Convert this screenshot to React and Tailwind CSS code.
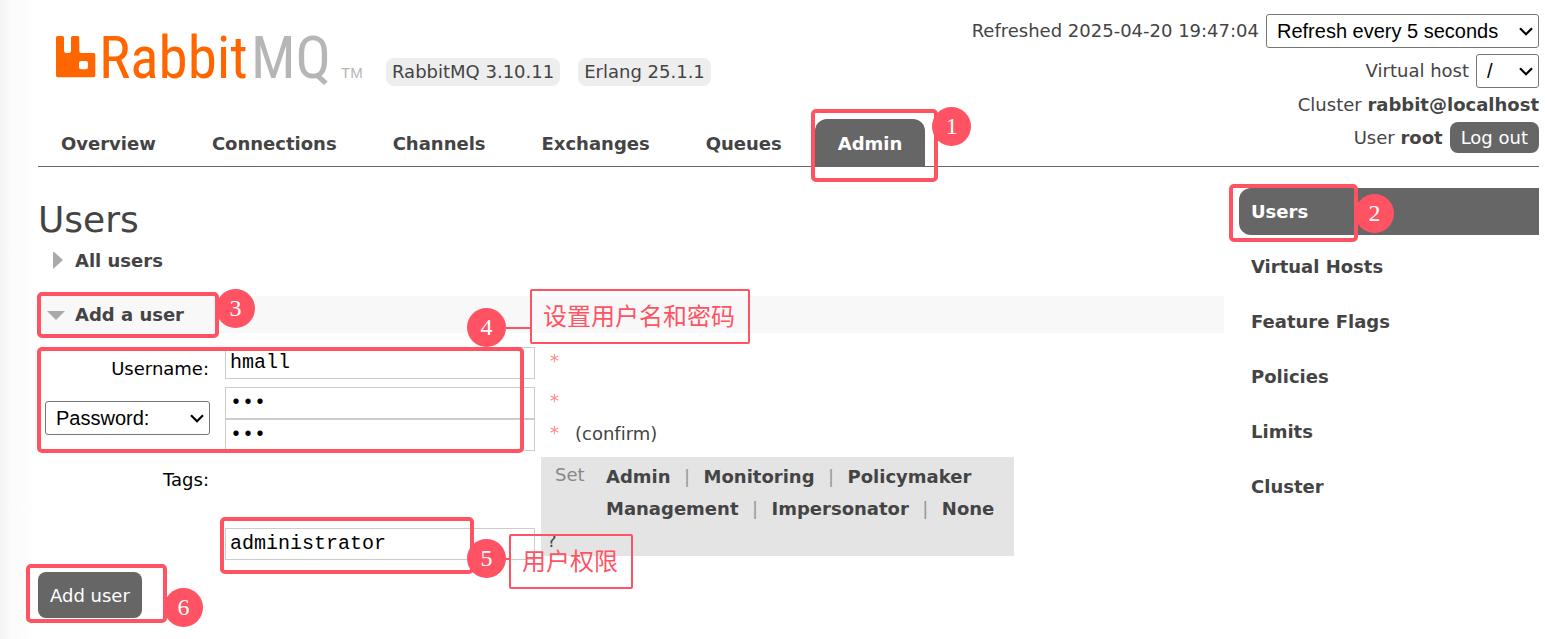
import React from "react";

const tabs = ["Overview", "Connections", "Channels", "Exchanges", "Queues", "Admin"];
const sections = ["Users", "Virtual Hosts", "Feature Flags", "Policies", "Limits", "Cluster"];
const tagRows = [
  ["Admin", "Monitoring", "Policymaker"],
  ["Management", "Impersonator", "None"],
];

function Frame({ className }) {
  return (
    <span
      aria-hidden="true"
      className={`pointer-events-none absolute z-10 rounded-[5px] border-4 border-[#ff5364] ${className}`}
    />
  );
}

function Badge({ n, className }) {
  return (
    <span
      className={`pointer-events-none absolute z-20 flex size-[39px] items-center justify-center rounded-full bg-[#ff5364] pb-[2px] font-['Liberation_Serif',serif] text-2xl font-normal text-white ${className}`}
    >
      {n}
    </span>
  );
}

function Callout({ children, className }) {
  return (
    <span
      className={`pointer-events-none absolute z-10 rounded-[2px] border-2 border-[#ff5364] pr-[13px] pb-1 pl-[11px] text-center font-['Noto_Sans_CJK_SC',sans-serif] text-2xl leading-[47px] font-normal whitespace-nowrap text-[#ff5364] ${className}`}
    >
      {children}
    </span>
  );
}

function Select({ id, label, options, className }) {
  return (
    <span className={`relative inline-block ${className}`}>
      <select
        id={id}
        aria-label={label}
        className="h-[34px] w-full appearance-none rounded-[3px] border border-[#767676] bg-white pr-8 pl-[10px] font-['Liberation_Sans',sans-serif] text-xl leading-8 text-black"
      >
        {options.map((o) => (
          <option key={o}>{o}</option>
        ))}
      </select>
      <svg
        viewBox="0 0 14 9"
        className="pointer-events-none absolute top-[13px] right-[6px] h-[9px] w-[14px]"
        fill="none"
        stroke="#000"
        strokeWidth="2.2"
      >
        <path d="M1 1.2 7 7.2 13 1.2" />
      </svg>
    </span>
  );
}

function Logo() {
  return (
    <svg viewBox="0 0 308 51" className="h-[51px] w-[308px] shrink-0 overflow-visible" role="img" aria-label="RabbitMQ">
      <path
        fill="#f60"
        fillRule="evenodd"
        d="M1.6 1H6.4Q8 1 8 2.6V15.8Q8 18 10.2 18H12.8Q15 18 15 15.8V2.6Q15 1 16.6 1H21.7Q23.3 1 23.3 2.6V15.8Q23.3 18 25.5 18H37.6Q39.3 18 39.3 19.7V40.6Q39.3 42.3 37.6 42.3H1.7Q0 42.3 0 40.6V2.6Q0 1 1.6 1ZM25 26Q23 26 23 28V32.300Q23 34.300 25 34.300H30Q32 34.300 32 32.300V28Q32 26 30 26Z"
      />
      <g fontFamily="'Roboto Condensed', 'Liberation Sans', sans-serif" fontSize="59">
        <text x="43" y="43" fill="#f60">Rabbit</text>
        <text x="195" y="43" fill="#b6b6b6">MQ</text>
      </g>
      <text x="285" y="43" fill="#b6b6b6" fontFamily="'Liberation Sans', sans-serif" fontSize="15">TM</text>
    </svg>
  );
}

const inputClass =
  "block h-8 w-full rounded-none border border-[#ccc] bg-white px-1 pb-[2px] font-['Liberation_Mono',monospace] text-xl leading-7 text-black outline-none";

export default function App() {
  return (
    <div className="min-h-screen bg-linear-to-r from-[#f3f3f3] via-[#fbfbfb] via-[12px] to-white to-[38px] pr-[6px] pb-5 pl-[38px] font-['DejaVu_Sans',sans-serif] text-lg text-[#444] [font-variant-ligatures:none]">
      <header className="flex justify-between border-b border-[#666]">
        <div>
          <div className="flex items-end pt-[35px] pl-[18px]">
            <Logo />
            <div className="ml-[22px] flex gap-[18px] leading-7">
              <span className="rounded-lg bg-[#eee] px-[6px]">RabbitMQ 3.10.11</span>
              <span className="rounded-lg bg-[#eee] px-[6px]">Erlang 25.1.1</span>
            </div>
          </div>
          <nav className="mt-[33px] flex gap-[10px]">
            {tabs.map((t) => (
              <div key={t} className="relative">
                <a
                  href="#tab"
                  className={`block rounded-t-xl px-[23px] pt-[2px] leading-[45px] font-bold ${
                    t === "Admin" ? "bg-[#666] text-white" : ""
                  }`}
                >
                  {t}
                </a>
                {t === "Admin" && (
                  <>
                    <Frame className="-top-[10px] -right-[13px] -left-1 h-[73px]" />
                    <Badge n="1" className="-top-3 -right-[46px]" />
                  </>
                )}
              </div>
            ))}
          </nav>
        </div>
        <div className="flex flex-col items-end gap-[6px] pt-[14px]">
          <div className="flex items-center gap-[7px]">
            <span>Refreshed 2025-04-20 19:47:04</span>
            <Select
              id="refresh"
              label="Refresh interval"
              options={["Refresh every 5 seconds", "Refresh every 10 seconds", "Do not refresh"]}
              className="w-[273px]"
            />
          </div>
          <div className="flex items-center gap-[7px]">
            <label htmlFor="vhost">Virtual host</label>
            <Select id="vhost" options={["/", "All"]} className="w-[63px]" />
          </div>
          <div className="leading-[22px]">
            Cluster <b>rabbit@localhost</b>
          </div>
          <div className="flex items-center gap-[7px]">
            <span>
              User <b>root</b>
            </span>
            <button type="button" className="rounded-lg bg-[#666] px-[11px] leading-[31px] text-white">
              Log out
            </button>
          </div>
        </div>
      </header>

      <div className="mt-[21px] flex gap-[15px]">
        <main className="flex-1 pt-[9px]">
          <h1 className="text-4xl leading-[45px]">Users</h1>

          <h2 className="flex h-[37px] items-center font-bold">
            <svg viewBox="0 0 37 18" className="h-[18px] w-[37px]">
              <path d="M15 -1 25 8 15 17Z" fill="#aaa" />
            </svg>
            All users
          </h2>

          <h2 className="relative mt-[17px] flex h-[37px] items-center bg-[#f8f8f8] font-bold">
            <svg viewBox="0 0 37 18" className="h-[18px] w-[37px]">
              <path d="M9 5H27L18 14Z" fill="#aaa" />
            </svg>
            Add a user
            <Frame className="-top-1 -left-px h-[46px] w-[182px]" />
            <Badge n="3" className="-top-[7px] left-[178px]" />
          </h2>

          <form className="mt-[14px]" onSubmit={(e) => e.preventDefault()}>
            <div className="relative">
              <div className="flex">
                <label htmlFor="username" className="mt-3 w-[171px] text-right leading-5 text-black">
                  Username:
                </label>
                <div className="ml-4 w-[310px]">
                  <input id="username" type="text" defaultValue="hmall" className={inputClass} />
                </div>
                <span className="ml-[15px] leading-7 text-[#f88]">*</span>
              </div>
              <div className="mt-2 flex">
                <div className="mt-[14px] w-[172px] pl-[7px]">
                  <Select
                    id="password-kind"
                    label="Password type"
                    options={["Password:", "Hashed password:", "No password"]}
                    className="w-[165px]"
                  />
                </div>
                <div className="ml-[15px] w-[310px]">
                  <input type="password" aria-label="Password" defaultValue="123" className={inputClass} />
                  <input type="password" aria-label="Confirm password" defaultValue="123" className={inputClass} />
                </div>
                <div className="ml-[15px]">
                  <div className="h-8 leading-7 text-[#f88]">*</div>
                  <div className="flex gap-4">
                    <span className="leading-7 text-[#f88]">*</span>
                    <span className="leading-[30px]">(confirm)</span>
                  </div>
                </div>
              </div>
              <Frame className="top-0 -left-px h-[106px] w-[487px]" />
              <Badge n="4" className="-top-[39px] left-[429px]" />
              <span className="absolute -top-5 left-[468px] h-[2px] w-6 bg-[#ff5364]" />
              <Callout className="-top-[58px] left-[492px]">设置用户名和密码</Callout>
            </div>

            <div className="relative mt-[6px] flex">
              <label htmlFor="tags" className="mt-[9px] w-[171px] text-right text-black">
                Tags:
              </label>
              <div className="ml-4 w-[310px] pt-[71px]">
                <input id="tags" type="text" defaultValue="administrator" className={inputClass} />
              </div>
              <div className="mb-1 ml-[6px] w-[473px] bg-[#e4e4e4] pt-1 pl-[14px]">
                <div className="flex">
                  <span className="w-[51px] text-[#888]">Set</span>
                  <div className="leading-8">
                    {tagRows.map((row) => (
                      <div key={row[0]} className="flex">
                        {row.map((tag, i) => (
                          <React.Fragment key={tag}>
                            {i > 0 && <span className="w-[33px] text-center text-[#999]">|</span>}
                            <button type="button" className="font-bold">
                              {tag}
                            </button>
                          </React.Fragment>
                        ))}
                      </div>
                    ))}
                  </div>
                </div>
                <button type="button" aria-label="Help" className="-ml-2 block leading-[31px]">
                  ?
                </button>
              </div>
              <Frame className="top-[60px] left-[182px] h-[57px] w-[254px]" />
              <Badge n="5" className="top-[82px] left-[429px]" />
              <span className="absolute top-[101px] left-[468px] h-[2px] w-1 bg-[#ff5364]" />
              <Callout className="top-[77px] left-[471px]">用户权限</Callout>
            </div>

            <div className="relative mt-3 w-fit">
              <button type="submit" className="rounded-lg bg-[#666] px-3 pt-[2px] leading-[44px] text-white">
                Add user
              </button>
              <Frame className="-top-[8px] -left-3 h-[59px] w-[141px]" />
              <Badge n="6" className="top-4 left-[126px]" />
            </div>
          </form>
        </main>

        <nav className="flex w-[300px] flex-col gap-2">
          {sections.map((s) => (
            <div key={s} className="relative">
              <a
                href="#section"
                className={`block rounded-l-xl pl-3 leading-[47px] font-bold ${
                  s === "Users" ? "bg-[#666] text-white" : ""
                }`}
              >
                {s}
              </a>
              {s === "Users" && (
                <>
                  <Frame className="-top-1 -left-[10px] h-[58px] w-[129px]" />
                  <Badge n="2" className="top-[6px] left-[116px]" />
                </>
              )}
            </div>
          ))}
        </nav>
      </div>
    </div>
  );
}
